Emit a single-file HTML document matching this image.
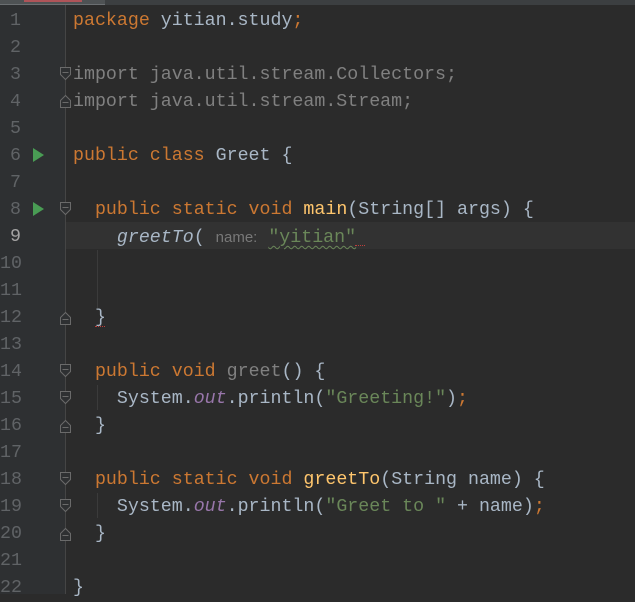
<!DOCTYPE html>
<html><head><meta charset="utf-8">
<style>
html,body{margin:0;padding:0}
body{width:635px;height:594px;background:#2b2b2b;position:relative;overflow:hidden;font-family:"Liberation Mono",monospace;font-size:18.3px}
.top{position:absolute;left:0;top:0;width:635px;height:5px;background:#3c3f41}
.tab{position:absolute;left:0;top:0;width:105px;height:4px;background:#4e5254;border-bottom:1px solid #6b6f72}
.sq{position:absolute;left:24px;top:0;width:58px;height:2px;background:#c8555a;opacity:.8}
.gut{position:absolute;left:0;top:5px;width:65px;height:589px;background:#2e3032}
.sep{position:absolute;left:65px;top:5px;width:1px;height:589px;background:#454545}
.cur{position:absolute;left:66px;top:222px;width:569px;height:27px;background:#323232}
.ln{position:absolute;left:0;width:21px;text-align:right;color:#606366;height:27px;line-height:27px;margin-top:2px}
.c{position:absolute;left:73px;height:27px;line-height:27px;white-space:pre;color:#a9b7c6;margin-top:2px}
.k{color:#cc7832}.m{color:#ffc66d}.s{color:#6a8759}.f{color:#9876aa;font-style:italic}.g{color:#808080}
.run{position:absolute;left:33px;width:0;height:0;border-top:7px solid transparent;border-bottom:7px solid transparent;border-left:11px solid #499c54}
.guide{position:absolute;width:1px;background:#3b3b3b}
.hint{font-family:"Liberation Sans",sans-serif;font-size:15px;color:#787878}
.wav{text-decoration:underline wavy #6a8759;text-decoration-thickness:1px;text-underline-offset:3px}
.err{position:absolute;height:3px;width:10px;border-bottom:1px dotted #bc3f3c}
</style></head><body>
<div class="top"></div><div class="tab"></div><div class="sq"></div>
<div class="gut"></div><div class="sep"></div>
<div class="cur"></div>
<div class="guide" style="left:97px;top:250px;height:58px"></div>
<div class="guide" style="left:97px;top:385px;height:25px"></div>
<div class="guide" style="left:97px;top:493px;height:25px"></div>

<div class="ln" style="top:6px">1</div>
<div class="ln" style="top:33px">2</div>
<div class="ln" style="top:60px">3</div>
<div class="ln" style="top:87px">4</div>
<div class="ln" style="top:114px">5</div>
<div class="ln" style="top:141px">6</div>
<div class="ln" style="top:168px">7</div>
<div class="ln" style="top:195px">8</div>
<div class="ln" style="top:222px;color:#a4a3a3">9</div>
<div class="ln" style="top:249px">10</div>
<div class="ln" style="top:276px">11</div>
<div class="ln" style="top:303px">12</div>
<div class="ln" style="top:330px">13</div>
<div class="ln" style="top:357px">14</div>
<div class="ln" style="top:384px">15</div>
<div class="ln" style="top:411px">16</div>
<div class="ln" style="top:438px">17</div>
<div class="ln" style="top:465px">18</div>
<div class="ln" style="top:492px">19</div>
<div class="ln" style="top:519px">20</div>
<div class="ln" style="top:546px">21</div>
<div class="ln" style="top:573px">22</div>

<div class="run" style="top:148px"></div>
<div class="run" style="top:202px"></div>

<svg style="position:absolute;left:0;top:0" width="80" height="594">
<g fill="#2e3032" stroke="#6a6a6a" stroke-width="1">
<path d="M60.5 67.5h10v7l-5 5l-5-5z"/><path d="M62.5 72.5h6"/>
<path d="M60.5 107.5h10v-7l-5-5l-5 5z"/><path d="M62.5 102.5h6"/>
<path d="M60.5 202.5h10v7l-5 5l-5-5z"/><path d="M62.5 207.5h6"/>
<path d="M60.5 324.5h10v-7l-5-5l-5 5z"/><path d="M62.5 319.5h6"/>
<path d="M60.5 364.5h10v7l-5 5l-5-5z"/><path d="M62.5 369.5h6"/>
<path d="M60.5 391.5h10v7l-5 5l-5-5z"/><path d="M62.5 396.5h6"/>
<path d="M60.5 432.5h10v-7l-5-5l-5 5z"/><path d="M62.5 427.5h6"/>
<path d="M60.5 472.5h10v7l-5 5l-5-5z"/><path d="M62.5 477.5h6"/>
<path d="M60.5 499.5h10v7l-5 5l-5-5z"/><path d="M62.5 504.5h6"/>
<path d="M60.5 540.5h10v-7l-5-5l-5 5z"/><path d="M62.5 535.5h6"/>
</g></svg>

<div class="c" style="top:6px"><span class="k">package</span> yitian.study<span class="k">;</span></div>
<div class="c" style="top:60px"><span class="g">import java.util.stream.Collectors;</span></div>
<div class="c" style="top:87px"><span class="g">import java.util.stream.Stream;</span></div>
<div class="c" style="top:141px"><span class="k">public class</span> Greet {</div>
<div class="c" style="top:195px">  <span class="k">public static void</span> <span class="m">main</span>(String[] args) {</div>
<div class="c" style="top:222px">    <i>greetTo</i>( <span class="hint">name:</span> <span class="s wav">"yitian"</span></div>
<div class="err" style="left:355px;top:242px"></div>
<div class="c" style="top:303px">  }</div>
<div class="err" style="left:95px;top:323px"></div>
<div class="c" style="top:357px">  <span class="k">public void</span> <span class="g">greet</span>() {</div>
<div class="c" style="top:384px">    System.<span class="f">out</span>.println(<span class="s">"Greeting!"</span>)<span class="k">;</span></div>
<div class="c" style="top:411px">  }</div>
<div class="c" style="top:465px">  <span class="k">public static void</span> <span class="m">greetTo</span>(String name) {</div>
<div class="c" style="top:492px">    System.<span class="f">out</span>.println(<span class="s">"Greet to "</span> + name)<span class="k">;</span></div>
<div class="c" style="top:519px">  }</div>
<div class="c" style="top:573px">}</div>
</body></html>
